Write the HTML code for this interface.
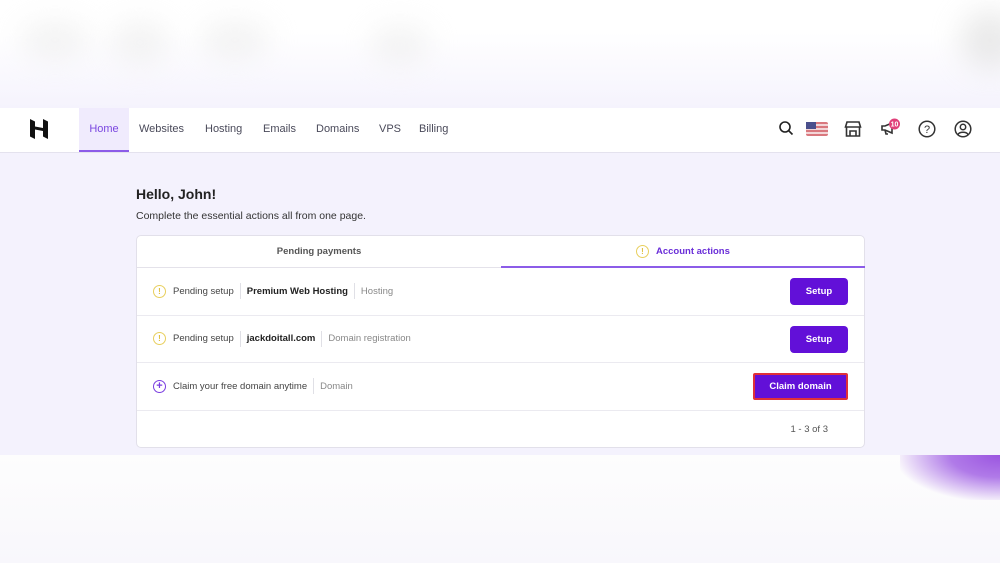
<!DOCTYPE html>
<html><head><style>
*{margin:0;padding:0;box-sizing:border-box}
body{width:1000px;height:563px;overflow:hidden;font-family:"Liberation Sans",sans-serif;background:#fff;position:relative}
.top{position:absolute;left:0;top:0;width:1000px;height:108px;background:linear-gradient(#fff 30%,#f5f3fd 100%)}
.blob{position:absolute;border-radius:50%;background:#ececec;filter:blur(14px);opacity:.6}
.bot{position:absolute;left:0;top:455px;width:1000px;height:108px;background:linear-gradient(#fdfdfd,#f8f7fc)}
.glow{position:absolute;left:900px;top:455px;width:100px;height:45px;background:radial-gradient(ellipse at 100% 0%,#9b55e0 0%,#b07ae8 35%,rgba(255,255,255,0) 75%)}
.app{position:absolute;left:0;top:108px;width:1000px;height:347px;background:#f4f2fd}
.nav{height:45px;background:#fff;border-bottom:1px solid #e4e2ee;position:relative}
.nav a{position:absolute;top:0;height:44px;line-height:42px;font-size:11px;color:#4a4a5a}
.home{left:79px;width:50px;text-align:center;background:#f0ebfd;color:#7a46e0!important;border-bottom:2px solid #8c5ce8}
.ic{position:absolute;top:12px}
h1{position:absolute;left:136px;top:78px;font-size:14px;color:#222;font-weight:bold}
.sub{position:absolute;left:136px;top:102px;font-size:10.5px;color:#333}
.card{position:absolute;left:136px;top:127px;width:729px;height:213px;background:#fff;border:1px solid #e2e0ea;border-radius:5px}
.tabs{height:32px;border-bottom:1px solid #e4e2ea;position:relative;font-size:9.5px;font-weight:bold}
.t1{position:absolute;left:0;width:364px;text-align:center;line-height:31px;color:#555}
.t2{position:absolute;left:364px;width:364px;line-height:31px;color:#6a2ed8;border-bottom:2px solid #8c5ce8;height:32px;padding-left:135px}
.row{height:47.5px;border-bottom:1px solid #ebeaf0;position:relative;font-size:9.5px;color:#444;display:flex;align-items:center;padding-left:16px}
.row .c{width:13px;height:13px;border-radius:50%;border:1.3px solid #e8cf5e;color:#e0c040;font-size:8px;text-align:center;line-height:11px;margin-right:7px;font-weight:bold}
.sep{border-left:1px solid #e0e0e6;height:16px;margin:0 6px}
.b{font-weight:bold;color:#222}
.g{color:#888}
.btn{position:absolute;right:16px;top:10px;height:27px;background:#6210d8;color:#fff;font-weight:bold;font-size:9.5px;border-radius:4px;line-height:27px;text-align:center}
</style></head><body>
<div class="top"></div>
<div class="blob" style="left:20px;top:20px;width:70px;height:40px"></div>
<div class="blob" style="left:110px;top:20px;width:60px;height:45px"></div>
<div class="blob" style="left:200px;top:20px;width:70px;height:40px"></div>
<div class="blob" style="left:370px;top:25px;width:60px;height:40px"></div>
<div class="blob" style="left:960px;top:10px;width:60px;height:60px;background:#ddd"></div>
<div class="app">
 <div class="nav">
  <svg style="position:absolute;left:30px;top:11px" width="18" height="20" viewBox="0 0 18 20"><path d="M0 0l5 2.5v5l8 1.5V0l5 2.5V20l-5-2.5v-5.5l-8-1.5v9.5l-5-2.5z" fill="#111"/></svg>
  <a class="home">Home</a><a style="left:139px">Websites</a><a style="left:205px">Hosting</a><a style="left:263px">Emails</a><a style="left:316px">Domains</a><a style="left:379px">VPS</a><a style="left:419px">Billing</a>
  <svg class="ic" style="left:778px" width="16" height="16" viewBox="0 0 16 16"><circle cx="7" cy="7" r="5" fill="none" stroke="#222" stroke-width="1.6"/><path d="M11 11l3.5 3.5" stroke="#222" stroke-width="1.6"/></svg>
  <svg class="ic" style="left:806px;top:14px" width="22" height="14" viewBox="0 0 22 14"><rect width="22" height="14" rx="2" fill="#d9787e"/><rect y="2" width="22" height="2" fill="#f3d6d8"/><rect y="6" width="22" height="2" fill="#f3d6d8"/><rect y="10" width="22" height="2" fill="#f3d6d8"/><rect width="10" height="7" fill="#4a4f8c"/></svg>
  <svg class="ic" style="left:844px" width="18" height="18" viewBox="0 0 18 18"><path d="M3 2h12l1.5 5h-15zM2.5 7v9h13V7M6 16v-5h6v5" fill="none" stroke="#333" stroke-width="1.6"/></svg>
  <svg class="ic" style="left:880px;top:10px" width="22" height="20" viewBox="0 0 22 20"><path d="M2 8h3l7-3v10l-7-3H2zM5 12l1 4h2" fill="none" stroke="#333" stroke-width="1.6"/><circle cx="14.5" cy="6" r="5.5" fill="#e0407a"/><text x="14.5" y="8.5" font-size="7" fill="#fff" text-anchor="middle" font-weight="bold" font-family="Liberation Sans">10</text></svg>
  <svg class="ic" style="left:918px" width="18" height="18" viewBox="0 0 18 18"><circle cx="9" cy="9" r="7.8" fill="none" stroke="#333" stroke-width="1.5"/><text x="9" y="13" font-size="11" text-anchor="middle" fill="#333" font-family="Liberation Sans">?</text></svg>
  <svg class="ic" style="left:954px" width="18" height="18" viewBox="0 0 18 18"><circle cx="9" cy="9" r="7.8" fill="none" stroke="#333" stroke-width="1.5"/><circle cx="9" cy="7" r="2.7" fill="none" stroke="#333" stroke-width="1.5"/><path d="M4 14.5c1.5-3 8.5-3 10 0" fill="none" stroke="#333" stroke-width="1.5"/></svg>
 </div>
 <h1>Hello, John!</h1>
 <div class="sub">Complete the essential actions all from one page.</div>
 <div class="card">
  <div class="tabs"><div class="t1">Pending payments</div><div class="t2"><span style="display:inline-block;width:13px;height:13px;border-radius:50%;border:1.3px solid #e8cf5e;color:#e0c040;font-size:8px;text-align:center;line-height:11px;margin-right:7px;vertical-align:middle">!</span>Account actions</div></div>
  <div class="row"><span class="c">!</span>Pending setup<span class="sep"></span><span class="b">Premium Web Hosting</span><span class="sep"></span><span class="g">Hosting</span><div class="btn" style="width:58px">Setup</div></div>
  <div class="row"><span class="c">!</span>Pending setup<span class="sep"></span><span class="b">jackdoitall.com</span><span class="sep"></span><span class="g">Domain registration</span><div class="btn" style="width:58px">Setup</div></div>
  <div class="row"><span class="c" style="border-color:#7a3de0;color:#7a3de0;font-size:11px;line-height:10px">+</span>Claim your free domain anytime<span class="sep"></span><span class="g">Domain</span><div class="btn" style="width:95px;border:2px solid #e0303a;border-radius:2px;line-height:23px">Claim domain</div></div>
  <div style="position:absolute;right:36px;top:188px;font-size:9.5px;color:#555">1 - 3 of 3</div>
 </div>
</div>
<div class="bot"></div><div class="glow"></div>
</body></html>
